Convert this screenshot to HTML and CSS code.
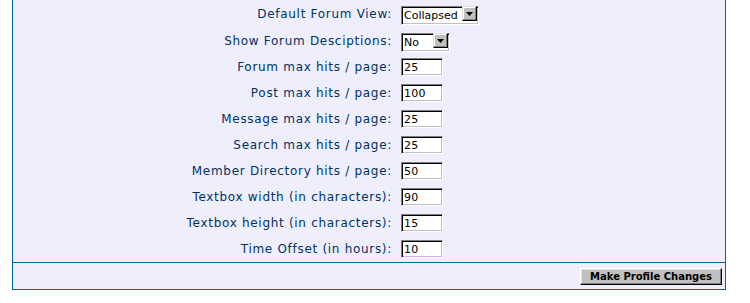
FILE: index.html
```html
<!DOCTYPE html>
<html>
<head>
<meta charset="utf-8">
<link rel="stylesheet" href="styles.css">
</head>
<body>
<div class="panel">
  <div class="rows">
    <div class="row tall">
      <label class="lbl">Default Forum View:</label>
      <div class="ctl">
        <span class="sel sel-wide">
          <select class="sel-box"><option>Collapsed</option><option>Expanded</option></select>
          <span class="sel-btn"><svg width="7" height="4" viewBox="0 0 7 4"><path d="M0 0h7L3.5 4z" fill="#000"/></svg></span>
        </span>
      </div>
    </div>
    <div class="row tall">
      <label class="lbl">Show Forum Desciptions:</label>
      <div class="ctl">
        <span class="sel sel-narrow">
          <select class="sel-box"><option>No</option><option>Yes</option></select>
          <span class="sel-btn"><svg width="7" height="4" viewBox="0 0 7 4"><path d="M0 0h7L3.5 4z" fill="#000"/></svg></span>
        </span>
      </div>
    </div>
    <div class="row"><label class="lbl">Forum max hits / page:</label><div class="ctl"><input class="txt" value="25"></div></div>
    <div class="row"><label class="lbl">Post max hits / page:</label><div class="ctl"><input class="txt" value="100"></div></div>
    <div class="row"><label class="lbl">Message max hits / page:</label><div class="ctl"><input class="txt" value="25"></div></div>
    <div class="row"><label class="lbl">Search max hits / page:</label><div class="ctl"><input class="txt" value="25"></div></div>
    <div class="row"><label class="lbl">Member Directory hits / page:</label><div class="ctl"><input class="txt" value="50"></div></div>
    <div class="row"><label class="lbl">Textbox width (in characters):</label><div class="ctl"><input class="txt" value="90"></div></div>
    <div class="row"><label class="lbl">Textbox height (in characters):</label><div class="ctl"><input class="txt" value="15"></div></div>
    <div class="row"><label class="lbl">Time Offset (in hours):</label><div class="ctl"><input class="txt" value="10"></div></div>
  </div>
  <div class="footer">
    <button class="btn" type="button">Make Profile Changes</button>
  </div>
</div>
</body>
</html>
```
FILE: styles.css
```css
html, body {
  margin: 0;
  padding: 0;
  background: #ffffff;
}
body {
  font-family: "DejaVu Sans", Verdana, sans-serif;
}
.panel {
  margin-left: 12px;
  width: 712px;
  border: 1px solid #006699;
  border-top: none;
  background: #eeeefc;
}
.rows {
  display: flex;
  flex-direction: column;
}
.row {
  display: grid;
  grid-template-columns: 385px 1fr;
  align-items: center;
  height: 26px;
}
.row.tall {
  height: 27px;
}
.lbl {
  text-align: right;
  padding-right: 6px;
  font-size: 12px;
  letter-spacing: 0.7px;
  color: #003366;
  white-space: nowrap;
}
.ctl {
  padding-left: 3px;
  display: flex;
  align-items: center;
}
.txt {
  box-sizing: border-box;
  width: 42px;
  height: 18px;
  margin: 0;
  padding: 0 0 0 2px;
  font-family: "DejaVu Sans", Verdana, sans-serif;
  font-size: 11px;
  letter-spacing: 0.3px;
  color: #000;
  background: #fff;
  border-style: solid;
  border-width: 1px;
  border-color: #808080 #ffffff #ffffff #808080;
  box-shadow: inset 1px 1px 0 #000, inset -1px -1px 0 #c0c0c0;
  outline: none;
}
.sel {
  position: relative;
  display: inline-block;
  height: 19px;
}
.sel-wide { width: 78px; }
.sel-narrow { width: 49px; }
.sel-box {
  -webkit-appearance: none;
  appearance: none;
  box-sizing: border-box;
  width: 100%;
  height: 100%;
  margin: 0;
  padding: 0 0 0 2px;
  font-family: "DejaVu Sans", Verdana, sans-serif;
  font-size: 11px;
  color: #000;
  background: #fff;
  border-style: solid;
  border-width: 1px;
  border-color: #808080 #ffffff #ffffff #808080;
  box-shadow: inset 1px 1px 0 #000, inset -1px -1px 0 #c0c0c0;
  border-radius: 0;
  outline: none;
}
.sel-btn {
  position: absolute;
  right: 2px;
  top: 2px;
  width: 15px;
  height: 15px;
  box-sizing: border-box;
  background: #c0c0c0;
  border-style: solid;
  border-width: 1px;
  border-color: #dfdfdf #000 #000 #dfdfdf;
  box-shadow: inset -1px -1px 0 #808080, inset 1px 1px 0 #fff;
  display: flex;
  align-items: center;
  justify-content: center;
  pointer-events: none;
}
.footer {
  border-top: 1px solid #006699;
  height: 26px;
  display: flex;
  justify-content: flex-end;
  align-items: flex-start;
  padding-right: 3px;
}
.btn {
  margin-top: 5px;
  box-sizing: border-box;
  height: 17px;
  width: 142px;
  padding: 0;
  font-family: "DejaVu Sans", Verdana, sans-serif;
  font-weight: bold;
  font-size: 10px;
  color: #000;
  background: #c0c0c0;
  border-style: solid;
  border-width: 1px;
  border-color: #ffffff #000000 #000000 #ffffff;
  box-shadow: inset -1px -1px 0 #808080, inset 1px 1px 0 #dfdfdf;
  border-radius: 0;
}
```
